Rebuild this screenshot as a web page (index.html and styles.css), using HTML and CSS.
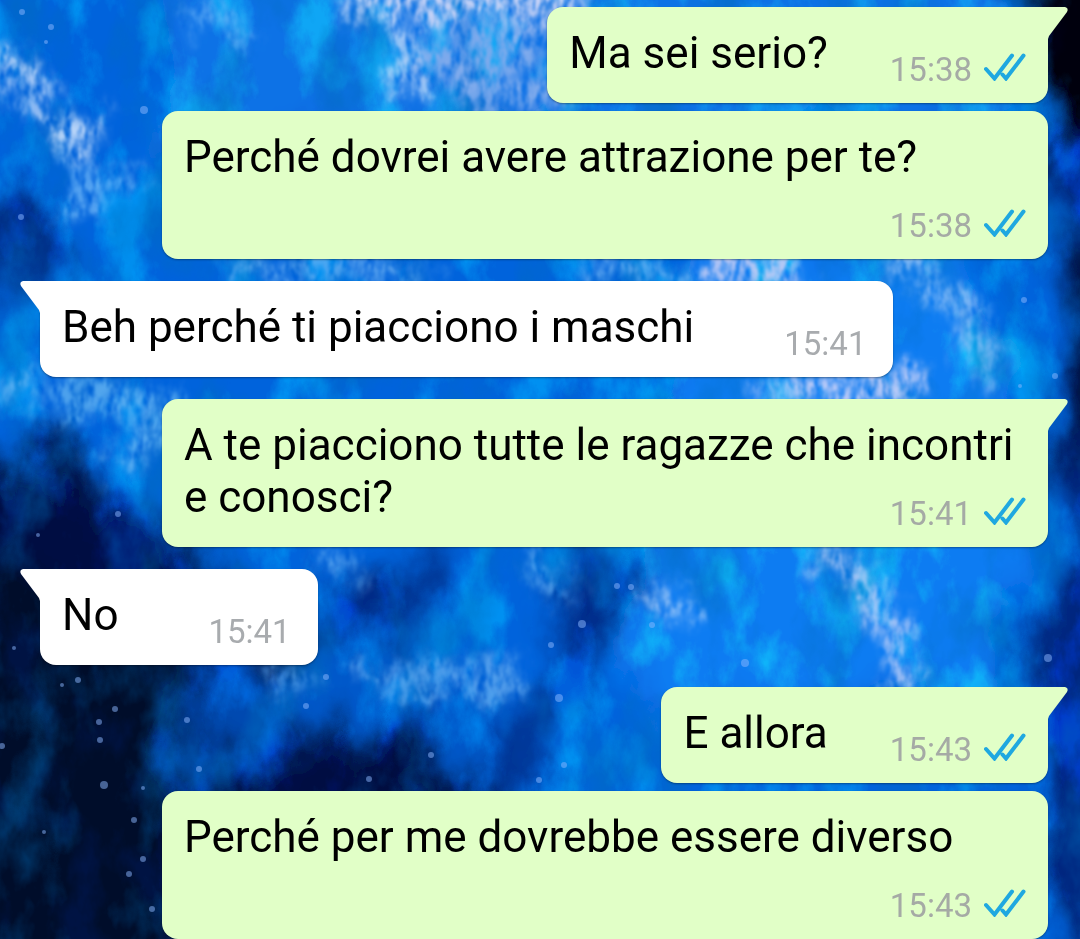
FILE: index.html
```html
<!DOCTYPE html>
<html lang="it">
<head>
    <meta charset="UTF-8">
    <meta name="viewport" content="width=device-width, initial-scale=1.0">
    <title>Chat</title>
    <link rel="stylesheet" href="styles.css">
</head>
<body>
    <!-- Shared shapes -->
    <svg class="defs" aria-hidden="true">
        <symbol id="ticks" viewBox="0 0 42 28">
            <path d="M2 16 L10.5 25.5 L28 2.5 M18.5 21.5 L22 25.5 L39.5 2.5" fill="none" stroke="#1fa8e0" stroke-width="4" stroke-linecap="round"/>
        </symbol>
        <symbol id="tail" viewBox="0 0 21 32">
            <path d="M0 0 H17 Q21 1 19 5 L1 29 L0 32 Z" fill="currentColor"/>
        </symbol>
    </svg>

    <!-- Wallpaper -->
    <svg class="wallpaper" viewBox="0 0 1080 939" preserveAspectRatio="xMidYMid slice" aria-hidden="true">
        <defs>
            <filter id="clouds" x="-10%" y="-10%" width="120%" height="120%">
                <feGaussianBlur stdDeviation="16" result="soft"/>
                <feTurbulence type="fractalNoise" baseFrequency="0.014 0.01" numOctaves="5" seed="4" result="noise"/>
                <feDisplacementMap in="soft" in2="noise" scale="90" xChannelSelector="R" yChannelSelector="G"/>
            </filter>
            <filter id="wisps" x="-20%" y="-20%" width="140%" height="140%">
                <feGaussianBlur stdDeviation="9" result="soft"/>
                <feTurbulence type="fractalNoise" baseFrequency="0.03 0.025" numOctaves="5" seed="9" result="noise"/>
                <feDisplacementMap in="soft" in2="noise" scale="60" xChannelSelector="R" yChannelSelector="G" result="bent"/>
                <feTurbulence type="fractalNoise" baseFrequency="0.14 0.06" numOctaves="3" seed="14"/>
                <feColorMatrix values="0 0 0 0 0  0 0 0 0 0  0 0 0 0 0  2.4 0 0 0 -0.55" result="grain"/>
                <feComposite in="bent" in2="grain" operator="in"/>
                <feGaussianBlur stdDeviation="0.8"/>
            </filter>
            <filter id="light" x="0" y="0" width="100%" height="100%">
                <feTurbulence type="fractalNoise" baseFrequency="0.02 0.012" numOctaves="6" seed="21"/>
                <feColorMatrix values="0 0 0 0 0.35  0 0 0 0 0.75  0 0 0 0 1  4 0 0 0 -1.9"/>
            </filter>
            <filter id="dark" x="0" y="0" width="100%" height="100%">
                <feTurbulence type="fractalNoise" baseFrequency="0.016 0.01" numOctaves="5" seed="33"/>
                <feColorMatrix values="0 0 0 0 0  0 0 0 0 0.15  0 0 0 0 0.5  0 3.2 0 0 -1.5"/>
            </filter>
        </defs>
        <rect width="1080" height="939" fill="#0463dc"/>
        <g filter="url(#clouds)">
            <rect x="-80" y="-80" width="1240" height="1100" fill="#0463dc"/>
            <path d="M150 -40 H1000 V120 H540 L420 110 L160 160 Z" fill="#0872e6"/>
            <path d="M700 240 H960 L1010 400 L1000 700 H640 L600 560 Z" fill="#077cf2"/>
            <path d="M-60 190 L40 200 L70 290 L-60 300 Z" fill="#032d86"/>
            <path d="M-80 480 L60 450 L180 540 L340 640 L420 730 L520 800 V1020 H-80 Z" fill="#011143"/>
            <path d="M-80 570 L60 560 L190 670 L190 1020 H-80 Z" fill="#000a2c"/>
            <path d="M340 560 L440 560 L420 640 L330 640 Z" fill="#042b86"/>
            <path d="M560 540 L650 540 L630 620 L570 700 L540 790 H480 L560 660 Z" fill="#032c88"/>
            <path d="M240 670 L420 640 L540 700 L480 780 L330 770 Z" fill="#0558ca"/>
            <path d="M190 670 L300 660 L290 740 L200 780 Z" fill="#0448b0"/>
            <path d="M330 750 L420 700 L450 800 H330 Z" fill="#011040"/>
            <path d="M1050 90 H1160 V1020 H1050 L1020 660 L1060 540 Z" fill="#03277f"/>
            <path d="M1000 -60 H1160 V150 H1050 Z" fill="#00020c"/>
            <path d="M1065 230 H1160 V470 H1070 Z" fill="#010b3a"/>
        </g>
        <rect class="light" width="1080" height="939" filter="url(#light)"/>
        <rect class="dark" width="1080" height="939" filter="url(#dark)"/>
        <g class="wisps" filter="url(#wisps)" fill="none" stroke="#cfe2fb" stroke-linecap="round">
            <path d="M0 60 L30 65 L52 110 L68 145 L100 130" stroke-width="22"/>
            <path d="M15 85 L45 100" stroke-width="30" stroke="#8fbcf4"/>
            <path d="M70 160 L85 205 L125 175" stroke-width="16" stroke="#7cc0fa"/>
            <path d="M350 0 L400 30 L410 100" stroke-width="18"/>
            <path d="M390 -5 H550" stroke-width="60" stroke="#c5d2f6"/>
            <path d="M430 60 L560 40 M460 85 L560 95" stroke-width="36" stroke="#7faaec"/>
            <path d="M200 15 L245 40" stroke-width="16" stroke="#6fb8f8"/>
            <path d="M720 270 H790" stroke-width="32" stroke="#c0cbf5"/>
            <path d="M230 270 H420 M590 270 H700" stroke-width="18" stroke="#70b3f3"/>
            <path d="M900 260 L945 290 L975 325 L985 370" stroke-width="22" stroke="#92c1f7"/>
            <path d="M780 390 H900 L910 375" stroke-width="30" stroke="#c2cef8"/>
            <path d="M0 395 L35 380 M60 405 L100 395 L165 410 M120 460 L165 430" stroke-width="24" stroke="#62b2f2"/>
            <path d="M820 550 L870 590 L900 650 L905 690" stroke-width="22" stroke="#c0d0f8"/>
            <path d="M650 595 L690 615" stroke-width="14"/>
            <path d="M370 670 L420 680 L500 685 L510 670" stroke-width="17" stroke="#70b3f3"/>
            <path d="M325 555 L350 575 M530 550 L560 590" stroke-width="16" stroke="#70b6f4"/>
            <path d="M270 675 L310 685" stroke-width="14" stroke="#5da9ef"/>
        </g>
        <g class="stars" fill="#8db8ff">
            <circle cx="22" cy="12" r="3"/>
            <circle cx="51" cy="27" r="3"/>
            <circle cx="46" cy="42" r="2"/>
            <circle cx="144" cy="110" r="4"/>
            <circle cx="21" cy="217" r="3"/>
            <circle cx="1024" cy="300" r="3"/>
            <circle cx="1055" cy="376" r="3"/>
            <circle cx="1020" cy="386" r="2"/>
            <circle cx="118" cy="514" r="3"/>
            <circle cx="38" cy="535" r="2"/>
            <circle cx="14" cy="648" r="2"/>
            <circle cx="78" cy="680" r="3"/>
            <circle cx="62" cy="685" r="2"/>
            <circle cx="115" cy="709" r="3"/>
            <circle cx="99" cy="722" r="3"/>
            <circle cx="100" cy="740" r="3"/>
            <circle cx="187" cy="720" r="3"/>
            <circle cx="2" cy="746" r="3"/>
            <circle cx="104" cy="785" r="4"/>
            <circle cx="143" cy="788" r="2"/>
            <circle cx="199" cy="769" r="3"/>
            <circle cx="134" cy="820" r="3"/>
            <circle cx="44" cy="832" r="2"/>
            <circle cx="143" cy="859" r="3"/>
            <circle cx="129" cy="874" r="3"/>
            <circle cx="152" cy="909" r="3"/>
            <circle cx="326" cy="677" r="3"/>
            <circle cx="306" cy="706" r="3"/>
            <circle cx="431" cy="755" r="3"/>
            <circle cx="551" cy="645" r="3"/>
            <circle cx="582" cy="624" r="4"/>
            <circle cx="617" cy="586" r="3"/>
            <circle cx="631" cy="587" r="3"/>
            <circle cx="559" cy="698" r="4"/>
            <circle cx="745" cy="663" r="4"/>
            <circle cx="652" cy="625" r="3"/>
            <circle cx="1048" cy="658" r="4"/>
            <circle cx="564" cy="765" r="3"/>
            <circle cx="539" cy="780" r="3"/>
            <circle cx="369" cy="779" r="3"/>
        </g>
    </svg>

    <main>
        <ol class="chat">
            <li class="message out first">
                <svg class="tail"><use href="#tail"/></svg>
                <span class="text">Ma sei serio?</span>
                <span class="meta"><time>15:38</time><svg class="ticks" role="img" aria-label="Letto"><use href="#ticks"/></svg></span>
            </li>
            <li class="message out">
                <span class="text">Perché dovrei avere attrazione per te?</span>
                <span class="meta"><time>15:38</time><svg class="ticks" role="img" aria-label="Letto"><use href="#ticks"/></svg></span>
            </li>
            <li class="message in first">
                <svg class="tail"><use href="#tail"/></svg>
                <span class="text">Beh perché ti piacciono i maschi</span>
                <span class="meta"><time>15:41</time></span>
            </li>
            <li class="message out first">
                <svg class="tail"><use href="#tail"/></svg>
                <span class="text">A te piacciono tutte le ragazze che incontri e conosci?</span>
                <span class="meta"><time>15:41</time><svg class="ticks" role="img" aria-label="Letto"><use href="#ticks"/></svg></span>
            </li>
            <li class="message in first">
                <svg class="tail"><use href="#tail"/></svg>
                <span class="text">No</span>
                <span class="meta"><time>15:41</time></span>
            </li>
            <li class="message out first">
                <svg class="tail"><use href="#tail"/></svg>
                <span class="text">E allora</span>
                <span class="meta"><time>15:43</time><svg class="ticks" role="img" aria-label="Letto"><use href="#ticks"/></svg></span>
            </li>
            <li class="message out">
                <span class="text">Perché per me dovrebbe essere diverso</span>
                <span class="meta"><time>15:43</time><svg class="ticks" role="img" aria-label="Letto"><use href="#ticks"/></svg></span>
            </li>
        </ol>
    </main>
</body>
</html>
```
FILE: styles.css
```css
* {
    box-sizing: border-box;
}
body {
    margin: 0;
    font-family: Roboto, "Liberation Sans", sans-serif;
    background: #0463dc;
}
.defs {
    position: absolute;
    width: 0;
    height: 0;
}
.wallpaper {
    position: fixed;
    inset: 0;
    width: 100%;
    height: 100%;
    z-index: -1;
}
.wallpaper .light {
    opacity: 0.6;
    mix-blend-mode: overlay;
}
.wallpaper .dark {
    opacity: 0.5;
}
.wallpaper .stars {
    opacity: 0.5;
}
.chat {
    display: flex;
    flex-direction: column;
    gap: 8px;
    margin: 0;
    padding: 7px 32px 0 40px;
    list-style: none;
}
.message {
    position: relative;
    display: flow-root;
    max-width: calc(100% - 122px);
    padding: 20px 22px 7px 22px;
    border-radius: 16px;
    box-shadow: 0 1px 2px rgba(0,0,0,0.35);
    font-size: 44px;
    line-height: 52px;
    color: #000;
}
.message.first:not(:first-child) {
    margin-top: 14px;
}
.message.out {
    align-self: flex-end;
    background: #e1ffc7;
}
.message.in {
    align-self: flex-start;
    padding-right: 27px;
    background: #fff;
}
.message.out.first {
    border-top-right-radius: 0;
}
.message.in.first {
    border-top-left-radius: 0;
}
/* time floats next to the last line, or drops below it when there is no room */
.meta {
    float: right;
    padding-top: 17px;
    margin-left: 62px;
    font-size: 33px;
    color: #a5aaa5;
}
.in .meta {
    margin-left: 90px;
    color: #a8abae;
}
.ticks {
    width: 42px;
    height: 28px;
    margin-left: 12px;
}
.tail {
    position: absolute;
    top: 0;
    width: 21px;
    height: 32px;
}
.out .tail {
    left: 100%;
    color: #e1ffc7;
}
.in .tail {
    right: 100%;
    color: #fff;
    transform: scaleX(-1);
}
```
